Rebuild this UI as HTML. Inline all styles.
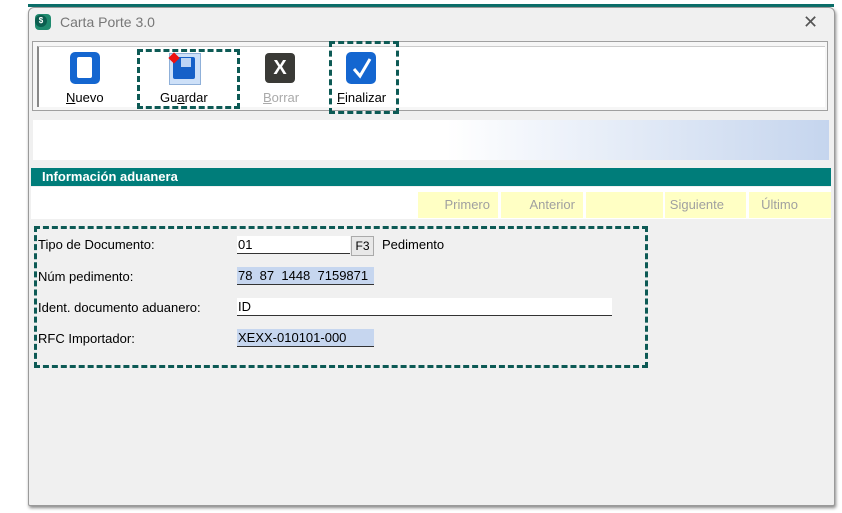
<!DOCTYPE html>
<html><head><style>
body{margin:0;width:842px;height:513px;background:#fff;position:relative;overflow:hidden;font-family:"Liberation Sans",sans-serif;}
.a{position:absolute;}
.win{left:28px;top:7px;width:805px;height:497px;background:#f0f0f0;border:1px solid #9a9a9a;box-shadow:1px 2px 3px #888;border-radius:6px 6px 2px 2px;}
.t{font-size:13px;color:#000;}
.dash{border:3px dashed #0d5a55;}
.nav{top:192px;height:26px;background:#ffffc4;color:#a0a0a0;font-size:13px;line-height:26px;text-align:right;}
.fld{height:17px;border-bottom:1px solid #333;font-size:13px;line-height:17px;padding-left:1px;}
</style></head><body>
<div class="a" style="left:28px;top:4px;width:806px;height:3px;background:#0a6d68"></div>
<div class="a win"></div>
<div class="a" style="left:35px;top:14px;width:16px;height:16px;border-radius:4px;background:#1f8a6e"></div>
<div class="a" style="left:35px;top:15px;width:12px;height:12px;border-radius:50%;background:#0c5e4f;color:#fff;font-size:8px;text-align:center;line-height:12px;font-weight:bold">$</div>
<div class="a" style="left:60px;top:14px;font-size:14px;color:#777">Carta Porte 3.0</div>
<div class="a" style="left:803px;top:12px;font-size:18px;color:#555">✕</div>
<div class="a" style="left:32px;top:41px;width:794px;height:68px;border:1px solid #a0a0a0;background:#f6f6f6"></div>
<div class="a" style="left:37px;top:46px;width:786px;height:60px;background:#fff;border-left:2px solid #888;border-top:1px solid #ccc"></div>
<div class="a" style="left:70px;top:52px;width:30px;height:32px;background:#1466d0;border-radius:5px"></div>
<div class="a" style="left:77px;top:57px;width:15px;height:21px;background:#fff;border-radius:2px"></div>
<div class="a t" style="left:66px;top:90px"><u>N</u>uevo</div>
<div class="a" style="left:169px;top:53px;width:30px;height:30px;background:#cde0f8;border:1px solid #8fb0d9"></div>
<div class="a" style="left:173px;top:57px;width:22px;height:22px;background:#1560c8;border-radius:2px"></div>
<div class="a" style="left:181px;top:58px;width:10px;height:9px;background:#bcd4f5"></div>
<div class="a" style="left:170px;top:54px;width:8px;height:8px;background:#e11;transform:rotate(45deg)"></div>
<div class="a t" style="left:160px;top:90px">Gu<u>a</u>rdar</div>
<div class="a dash" style="left:137px;top:49px;width:97px;height:54px"></div>
<div class="a" style="left:265px;top:53px;width:30px;height:30px;background:#3a3a36;border-radius:4px;color:#fff;font-weight:bold;font-size:20px;text-align:center;line-height:30px">X</div>
<div class="a t" style="left:263px;top:90px;color:#aaa"><u>B</u>orrar</div>
<div class="a" style="left:346px;top:52px;width:30px;height:32px;background:#1466d0;border-radius:5px"></div>
<svg class="a" style="left:346px;top:52px" width="30" height="32"><path d="M8 17 L14 24 L24 7" stroke="#fff" stroke-width="3" fill="none"/></svg>
<div class="a t" style="left:337px;top:90px"><u>F</u>inalizar</div>
<div class="a dash" style="left:329px;top:41px;width:64px;height:67px"></div>
<div class="a" style="left:33px;top:120px;width:796px;height:40px;background:linear-gradient(90deg,#fff 0%,#fff 52%,#c5d5ee 100%)"></div>
<div class="a" style="left:31px;top:168px;width:800px;height:18px;background:#007d7a;color:#fff;font-size:13px;font-weight:bold;line-height:18px;padding-left:11px;box-sizing:border-box">Información aduanera</div>
<div class="a" style="left:31px;top:187px;width:800px;height:32px;background:#fff"></div>
<div class="a nav" style="left:418px;width:80px;padding-right:8px;box-sizing:border-box">Primero</div>
<div class="a nav" style="left:501px;width:82px;padding-right:8px;box-sizing:border-box">Anterior</div>
<div class="a nav" style="left:586px;width:77px"></div>
<div class="a nav" style="left:665px;width:81px;padding-right:22px;box-sizing:border-box">Siguiente</div>
<div class="a nav" style="left:749px;width:82px;padding-right:33px;box-sizing:border-box">Último</div>
<div class="a dash" style="left:34px;top:226px;width:608px;height:136px"></div>
<div class="a t" style="left:38px;top:237px">Tipo de Documento:</div>
<div class="a fld" style="left:237px;top:236px;width:112px;background:#fff">01</div>
<div class="a" style="left:351px;top:236px;width:21px;height:18px;border:1px solid #aaa;background:#e8e8e8;font-size:12px;text-align:center;line-height:18px">F3</div>
<div class="a t" style="left:382px;top:237px">Pedimento</div>
<div class="a t" style="left:38px;top:269px">Núm pedimento:</div>
<div class="a fld" style="left:237px;top:267px;width:136px;background:#c6d6ef">78&nbsp; 87&nbsp; 1448&nbsp; 7159871</div>
<div class="a t" style="left:38px;top:300px">Ident. documento aduanero:</div>
<div class="a fld" style="left:237px;top:298px;width:374px;background:#fff">ID</div>
<div class="a t" style="left:38px;top:331px">RFC Importador:</div>
<div class="a fld" style="left:237px;top:329px;width:136px;background:#c6d6ef">XEXX-010101-000</div>
</body></html>
